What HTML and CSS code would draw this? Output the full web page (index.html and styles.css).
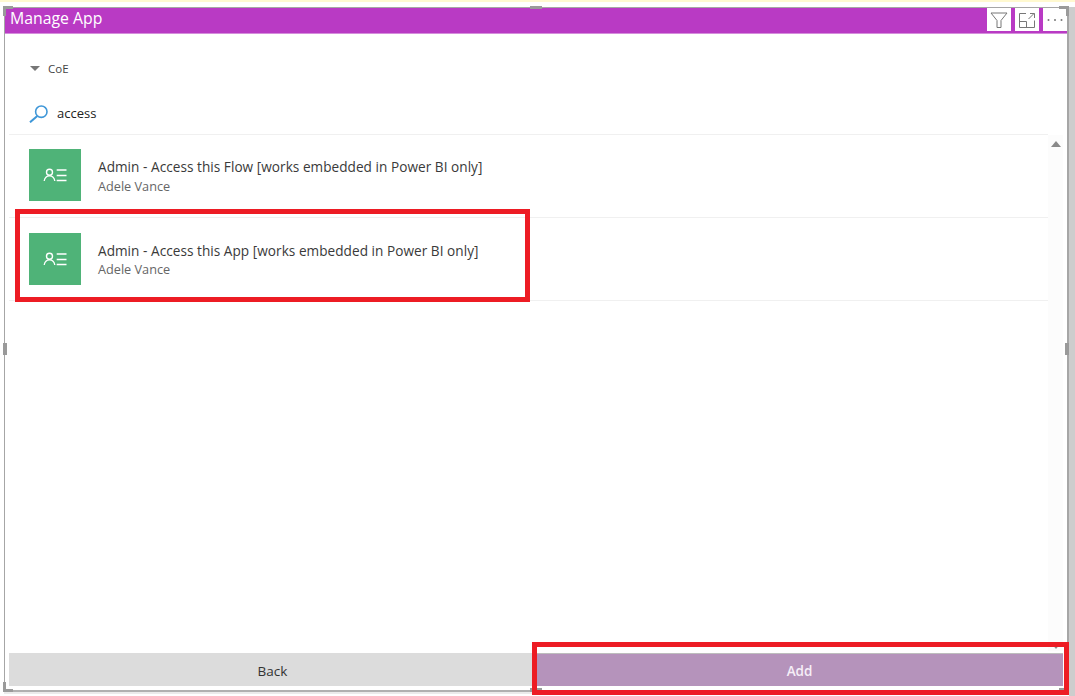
FILE: index.html
```html
<!DOCTYPE html>
<html lang="en">
<head>
<meta charset="utf-8">
<title>Manage App</title>
<link rel="stylesheet" href="styles.css">
</head>
<body>
<div class="strip"></div>
<div class="stage">
  <main class="frame">
    <header class="titlebar">
      <h1 class="title">Manage App</h1>
      <div class="tools">
        <button class="tool" aria-label="Filter"><svg width="18" height="18" viewBox="0 0 18 18"><path d="M1 2H17L11 9.5V16.5H7V9.5Z" fill="none" stroke="#777" stroke-width="1"/></svg></button>
        <button class="tool" aria-label="Focus mode"><svg width="18" height="18" viewBox="0 0 18 18"><path d="M8 2.5H1.5V16.500H16.500V9.500M1.500 10.500H8.500V16.500M10.500 8L16 2.500M12 2.500H16.500V7" fill="none" stroke="#777" stroke-width="1"/></svg></button>
        <button class="tool" aria-label="More options"><svg width="18" height="18" viewBox="0 0 18 18"><circle cx="2.500" cy="9" r="1" fill="#777"/><circle cx="9" cy="9" r="1" fill="#777"/><circle cx="15.500" cy="9" r="1" fill="#777"/></svg></button>
      </div>
    </header>
    <div class="env"><span class="caret"></span><span class="env-name">CoE</span></div>
    <div class="search">
      <svg class="search-icon" width="20" height="20" viewBox="0 0 20 20"><circle cx="12.300" cy="8.700" r="5.700" fill="none" stroke="#3f97d8" stroke-width="1.600"/><path d="M8.300 13L1 19.300" stroke="#3f97d8" stroke-width="2" fill="none"/></svg>
      <span class="query">access</span>
    </div>
    <div class="results">
      <ul class="list">
        <li class="row">
          <span class="app-icon"><svg width="24" height="16" viewBox="0 0 24 16"><circle cx="6.500" cy="5.300" r="3" fill="none" stroke="#fff" stroke-width="1.400"/><path d="M1.200 14C1.700 10.800 3.800 8.800 6.500 8.800S11.300 10.800 11.800 14M13.700 3H23.500M13.700 8.500H23.500M13.700 13.500H23.500" fill="none" stroke="#fff" stroke-width="1.300"/></svg></span>
          <div class="meta"><div class="name">Admin - Access this Flow [works embedded in Power BI only]</div><div class="owner">Adele Vance</div></div>
        </li>
        <li class="row">
          <span class="app-icon"><svg width="24" height="16" viewBox="0 0 24 16"><circle cx="6.500" cy="5.300" r="3" fill="none" stroke="#fff" stroke-width="1.400"/><path d="M1.200 14C1.700 10.800 3.800 8.800 6.500 8.800S11.300 10.800 11.800 14M13.700 3H23.500M13.700 8.500H23.500M13.700 13.500H23.500" fill="none" stroke="#fff" stroke-width="1.300"/></svg></span>
          <div class="meta"><div class="name">Admin - Access this App [works embedded in Power BI only]</div><div class="owner">Adele Vance</div></div>
        </li>
      </ul>
      <div class="scrollbar"><span class="arrow-up"></span><span class="arrow-down"></span></div>
    </div>
    <div class="actions">
      <button class="btn back">Back</button>
      <button class="btn add">Add</button>
    </div>
  </main>
  <div class="side"></div>
</div>
<span class="handle h-tl"></span><span class="handle h-tm"></span><span class="handle h-tr"></span>
<span class="handle h-ml"></span><span class="handle h-mr"></span>
<span class="handle h-bl"></span><span class="handle h-bm"></span><span class="handle h-br"></span>
<div class="callout callout-row"></div>
<div class="callout callout-add"></div>
</body>
</html>
```

FILE: styles.css
```css
* { box-sizing: border-box; }
html, body { margin: 0; padding: 0; }
body {
  position: relative;
  width: 1075px;
  height: 696px;
  overflow: hidden;
  background: #fff;
  font-family: "Open Sans", "Noto Sans", sans-serif;
  color: #333;
}
.strip { height: 2px; background: #fff9d0; }
.stage { display: flex; padding: 5px 0 0 4px; height: 694px; }
.frame {
  width: 1065px;
  height: 685px;
  display: flex;
  flex-direction: column;
  background: #fff;
  border-top: 1px solid #a6a6a6;
  border-left: 1px solid #a6a6a6;
  border-right: 2px solid #a6a6a6;
  border-bottom: 2px solid #b0b0b0;
  padding-bottom: 4px;
  box-shadow: 0 2px 0 #ebebeb;
}
.side { flex: 1; height: 689px; background: #cdcdcd; }
.titlebar {
  height: 26px;
  flex: none;
  display: flex;
  justify-content: space-between;
  background: #b93ac4;
  border-bottom: 1px solid #d58ddc;
}
.title {
  margin: 0;
  padding-left: 5px;
  font-size: 15.800px;
  font-weight: 400;
  line-height: 20px;
  color: #fff;
}
.tools { display: flex; gap: 4px; height: 23px; }
.tool {
  width: 24px;
  height: 23px;
  padding: 0;
  border: 0;
  background: #fff;
  display: flex;
  align-items: center;
  justify-content: center;
}
.env {
  height: 45px;
  flex: none;
  display: flex;
  align-items: center;
  padding: 23px 0 0 25px;
  font-size: 11.500px;
  color: #444;
}
.caret {
  width: 0;
  height: 0;
  border-left: 5px solid transparent;
  border-right: 5px solid transparent;
  border-top: 5px solid #777;
  margin-right: 8px;
}
.search {
  height: 56px;
  flex: none;
  margin: 0 19px 0 4px;
  padding: 13px 0 0 20px;
  display: flex;
  align-items: center;
  font-size: 13px;
  color: #222;
  border-bottom: 1px solid #f0f0f0;
}
.search-icon { margin: 0 8px 0 0; }
.results { flex: 1; display: flex; margin: 0 4px; min-height: 0; }
.list { flex: 1; margin: 0; padding: 0; list-style: none; }
.row {
  height: 83px;
  display: flex;
  align-items: center;
  padding-left: 20px;
  border-bottom: 1px solid #f0f0f0;
}
.row:first-child { padding-bottom: 2px; }
.row:first-child .owner { margin: 1px 0 -1px; }
.app-icon {
  width: 52px;
  height: 52px;
  display: flex;
  align-items: center;
  justify-content: center;
  background: #4fb378;
}
.meta { margin-left: 17px; padding-top: 1px; }
.name { font-size: 13.600px; line-height: 18px; letter-spacing: 0.04px; color: #3a3a3a; }
.owner { font-size: 12.700px; line-height: 18px; color: #666; }
.scrollbar {
  width: 15px;
  flex: none;
  background: #fcfcfc;
  display: flex;
  flex-direction: column;
  justify-content: space-between;
  align-items: center;
  padding: 6px 0 2px;
}
.arrow-up, .arrow-down {
  width: 0;
  height: 0;
  border-left: 5px solid transparent;
  border-right: 5px solid transparent;
}
.arrow-up { border-bottom: 6px solid #8a8a8a; }
.arrow-down { border-top: 6px solid #8a8a8a; }
.actions { flex: none; display: flex; height: 33px; margin: 2px 4px 0; }
.btn {
  flex: 1;
  border: 0;
  padding: 2px 0 0;
  font-family: inherit;
  font-size: 13.500px;
}
.back { background: #dcdcdc; color: #333; }
.add { background: #b593bb; color: #f6eef7; font-weight: 600; border-top: 1px solid #bdbdbd; }
.handle { position: absolute; background: #9a9a9a; }
.h-tl { left: 3px; top: 6px; width: 10px; height: 10px; clip-path: polygon(0 0, 100% 0, 100% 30%, 30% 30%, 30% 100%, 0 100%); }
.h-tm { left: 530px; top: 6px; width: 12px; height: 3px; }
.h-tr { left: 1059px; top: 6px; width: 10px; height: 10px; clip-path: polygon(0 0, 100% 0, 100% 100%, 70% 100%, 70% 30%, 0 30%); }
.h-ml { left: 3px; top: 343px; width: 4px; height: 12px; }
.h-mr { left: 1065px; top: 343px; width: 4px; height: 12px; }
.h-bl { left: 3px; top: 682px; width: 10px; height: 10px; clip-path: polygon(0 0, 30% 0, 30% 70%, 100% 70%, 100% 100%, 0 100%); }
.h-bm { left: 530px; top: 688px; width: 12px; height: 4px; }
.h-br { left: 1059px; top: 688px; width: 5px; height: 2px; }
.callout { position: absolute; border: 5px solid #ed1c24; }
.callout-row { left: 15px; top: 209px; width: 515px; height: 93px; }
.callout-add { left: 532px; top: 642px; width: 537px; height: 53px; }
```
